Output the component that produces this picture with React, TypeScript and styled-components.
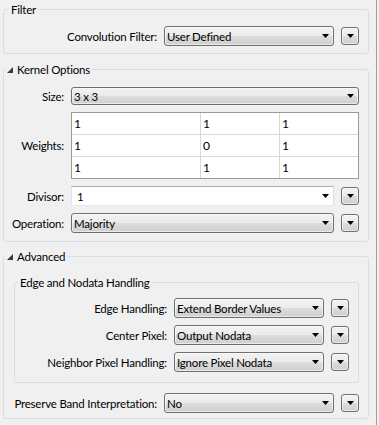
import React from "react";
import styled, { createGlobalStyle } from "styled-components";

const GlobalStyle = createGlobalStyle`
  html, body { margin: 0; padding: 0; background: #f0f0f0; }
  body {
    font-family: Lato, "Noto Sans", sans-serif;
    font-size: 11.5px;
    letter-spacing: -0.2px;
    color: #000;
  }
  * { box-sizing: border-box; }
`;

const Panel = styled.div`
  width: 377px;
  height: 425px;
  border-right: 1px solid #a0a0a0;
  padding: 2px 7px 0 3px;
  display: flex;
  flex-direction: column;
  overflow: hidden;
`;

const Group = styled.fieldset<{ $mt?: number }>`
  margin: ${(p) => p.$mt ?? 0}px 0 0 0;
  padding: 0;
  border: 1px solid #d5dfe5;
  border-radius: 3px;
  min-width: 0;
`;

const Legend = styled.legend<{ $ml: number }>`
  margin-left: ${(p) => p.$ml}px;
  padding: 0 2px;
  height: 15px;
  line-height: 15px;
  display: flex;
  align-items: center;
  gap: 4px;
  white-space: nowrap;
`;

const GroupBody = styled.div<{ $pad: string }>`
  display: flex;
  flex-direction: column;
  padding: ${(p) => p.$pad};
`;

const FormGrid = styled.div<{ $cols: string; $pad: string; $mt?: number }>`
  display: grid;
  grid-template-columns: ${(p) => p.$cols};
  column-gap: 7px;
  row-gap: 7px;
  align-items: center;
  padding: ${(p) => p.$pad};
  margin-top: ${(p) => p.$mt ?? 0}px;
`;

const Label = styled.div`
  display: flex;
  justify-content: flex-end;
  white-space: nowrap;
  line-height: 15px;
`;

const Combo = styled.div<{ $h?: number; $span?: boolean }>`
  grid-column: ${(p) => (p.$span ? "span 2" : "auto")};
  height: ${(p) => p.$h ?? 20}px;
  border: 1px solid #707070;
  border-radius: 3px;
  background: linear-gradient(#f2f2f2 0%, #ebebeb 50%, #dddddd 50%, #cfcfcf 100%);
  box-shadow: inset 0 0 0 1px rgba(255, 255, 255, 0.55);
  display: flex;
  align-items: center;
  justify-content: space-between;
  padding: 0 4px 0 2px;
  white-space: nowrap;
  overflow: hidden;
`;

const EditCombo = styled.div`
  height: 20px;
  background: #fff;
  border: 1px solid;
  border-color: #abadb3 #dbdfe6 #e3e9ef #e2e3ea;
  display: flex;
  align-items: center;
  justify-content: space-between;
  padding: 0 4px 0 5px;
`;

const DropButton = styled.div`
  width: 18px;
  height: 18px;
  border: 1px solid #707070;
  border-radius: 3px;
  background: linear-gradient(#f2f2f2 0%, #ebebeb 50%, #dddddd 50%, #cfcfcf 100%);
  box-shadow: inset 0 0 0 1px rgba(255, 255, 255, 0.55);
  display: flex;
  align-items: center;
  justify-content: center;
`;

const WeightsGrid = styled.div`
  grid-column: span 2;
  display: grid;
  grid-template-columns: 128px 78px 1fr;
  grid-auto-rows: 21px;
  gap: 1px;
  background: #d9d9d9;
  border: 1px solid #9a9a9a;
`;

const Cell = styled.div`
  background: #fff;
  display: flex;
  align-items: center;
  padding-left: 2px;
  font-size: 12px;
`;

const Arrow = () => (
  <svg width="7" height="4" viewBox="0 0 7 4">
    <path d="M0 0H7L3.5 4Z" fill="#000" />
  </svg>
);

const Expander = () => (
  <svg width="6" height="6" viewBox="0 0 6 6">
    <path d="M6 0V6H0Z" fill="#3c3c3c" />
  </svg>
);

type SelectProps = { value: string; h?: number; span?: boolean };
const Select = ({ value, h, span }: SelectProps) => (
  <Combo $h={h} $span={span}>
    <span>{value}</span>
    <Arrow />
  </Combo>
);

const MenuButton = () => (
  <DropButton>
    <Arrow />
  </DropButton>
);

const weights = [
  ["1", "1", "1"],
  ["1", "0", "1"],
  ["1", "1", "1"],
];

export default function App() {
  return (
    <>
      <GlobalStyle />
      <Panel>
        <Group>
          <Legend $ml={5}>Filter</Legend>
          <FormGrid $cols="1fr 170px 18px" $pad="9px 9px 7px 0">
            <Label>Convolution Filter:</Label>
            <Select value="User Defined" />
            <MenuButton />
          </FormGrid>
        </Group>

        <Group $mt={8}>
          <Legend $ml={1}>
            <Expander />
            Kernel Options
          </Legend>
          <FormGrid $cols="1fr 263px 18px" $pad="10px 9px 8px 0">
            <Label>Size:</Label>
            <Select value="3 x 3" h={18} span />
            <Label>Weights:</Label>
            <WeightsGrid>
              {weights.flat().map((v, i) => (
                <Cell key={i}>{v}</Cell>
              ))}
            </WeightsGrid>
            <Label>Divisor:</Label>
            <EditCombo>
              <span>1</span>
              <Arrow />
            </EditCombo>
            <MenuButton />
            <Label>Operation:</Label>
            <Select value="Majority" />
            <MenuButton />
          </FormGrid>
        </Group>

        <Group $mt={7}>
          <Legend $ml={1}>
            <Expander />
            Advanced
          </Legend>
          <GroupBody $pad="11px 9px 5px 10px">
            <Group>
              <Legend $ml={3}>Edge and Nodata Handling</Legend>
              <FormGrid $cols="1fr 150px 18px" $pad="8px 9px 10px 0">
                <Label>Edge Handling:</Label>
                <Select value="Extend Border Values" />
                <MenuButton />
                <Label>Center Pixel:</Label>
                <Select value="Output Nodata" />
                <MenuButton />
                <Label>Neighbor Pixel Handling:</Label>
                <Select value="Ignore Pixel Nodata" />
                <MenuButton />
              </FormGrid>
            </Group>
            <FormGrid $cols="minmax(0, 1fr) 170px 18px" $pad="0" $mt={10}>
              <Label>Preserve Band Interpretation:</Label>
              <Select value="No" />
              <MenuButton />
            </FormGrid>
          </GroupBody>
        </Group>
      </Panel>
    </>
  );
}
